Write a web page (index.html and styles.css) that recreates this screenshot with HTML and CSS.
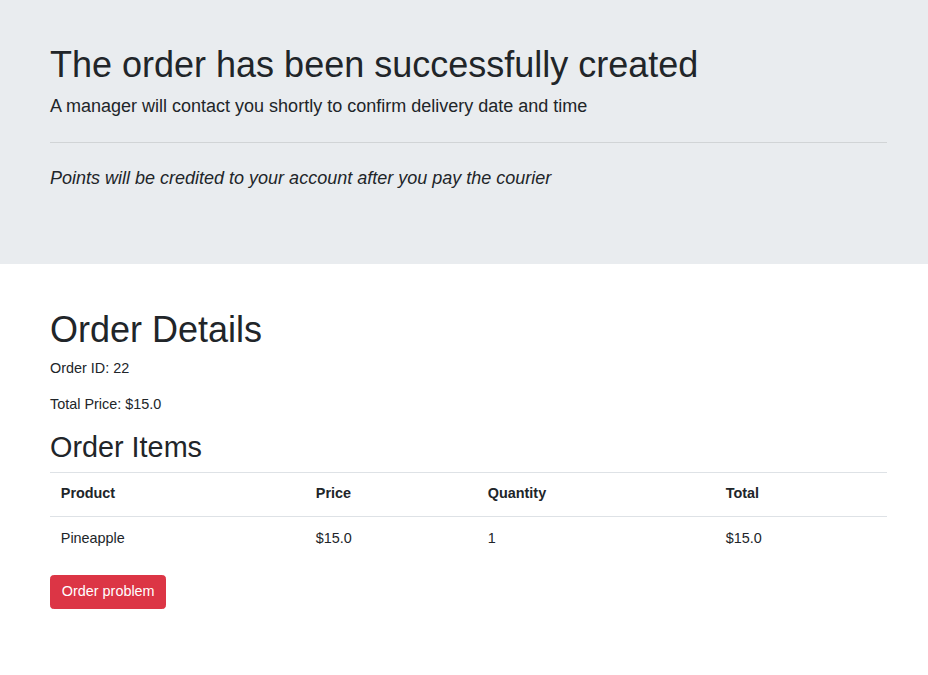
FILE: index.html
```html
<!DOCTYPE html>
<html lang="en">
<head>
<meta charset="utf-8">
<title>Order created</title>
<link rel="stylesheet" href="styles.css">
</head>
<body>
<header class="jumbotron">
  <h1 class="title">The order has been successfully created</h1>
  <p class="lead">A manager will contact you shortly to confirm delivery date and time</p>
  <hr class="divider">
  <p class="lead note">Points will be credited to your account after you pay the courier</p>
</header>
<main class="content">
  <h1 class="title">Order Details</h1>
  <p class="text">Order ID: 22</p>
  <p class="text">Total Price: $15.0</p>
  <h2 class="subtitle">Order Items</h2>
  <table class="items">
    <thead>
      <tr>
        <th class="col-product">Product</th>
        <th class="col-price">Price</th>
        <th class="col-qty">Quantity</th>
        <th class="col-total">Total</th>
      </tr>
    </thead>
    <tbody>
      <tr>
        <td>Pineapple</td>
        <td>$15.0</td>
        <td>1</td>
        <td>$15.0</td>
      </tr>
    </tbody>
  </table>
  <button class="btn-danger" type="button">Order problem</button>
</main>
</body>
</html>
```
FILE: styles.css
```css
* { box-sizing: border-box; }
html { font-size: 14.4px; }
body {
  margin: 0;
  font-family: "Liberation Sans", Arial, Helvetica, sans-serif;
  font-size: 1rem;
  line-height: 1.5;
  color: #212529;
  background: #fff;
}
.jumbotron {
  background: #e9ecef;
  padding: 43px 41px 57.6px 50px;
}
.title {
  margin: 0 0 7.2px;
  font-size: 36px;
  font-weight: 400;
  line-height: 1.2;
}
.lead {
  margin: 0 0 14.4px;
  font-size: 18px;
  font-weight: 400;
  line-height: 1.5;
}
.divider {
  margin: 21.6px 0;
  border: 0;
  border-top: 1px solid rgba(0, 0, 0, 0.1);
  height: 0;
}
.note { font-style: italic; }
.content {
  padding: 44px 41px 0 50px;
}
.text {
  margin: 0 0 14.4px;
  font-size: 14.4px;
}
.subtitle {
  margin: 0 0 7.2px;
  font-size: 28.8px;
  font-weight: 400;
  line-height: 1.2;
}
.items {
  width: 100%;
  border-collapse: collapse;
  margin-bottom: 15px;
  table-layout: fixed;
}
.items th,
.items td {
  padding: 10.8px;
  border-top: 1px solid #dee2e6;
  text-align: left;
  vertical-align: top;
  font-size: 14.4px;
  line-height: 21.6px;
}
.items th { font-weight: 700; }
.col-product { width: 255px; }
.col-price { width: 172px; }
.col-qty { width: 238px; }
.col-total { width: 172px; }
.btn-danger {
  display: inline-block;
  font-family: inherit;
  font-size: 14.4px;
  line-height: 21.6px;
  padding: 5.4px 10.8px;
  border: 1px solid #dc3545;
  border-radius: 3.6px;
  background: #dc3545;
  color: #fff;
  cursor: pointer;
}
```
